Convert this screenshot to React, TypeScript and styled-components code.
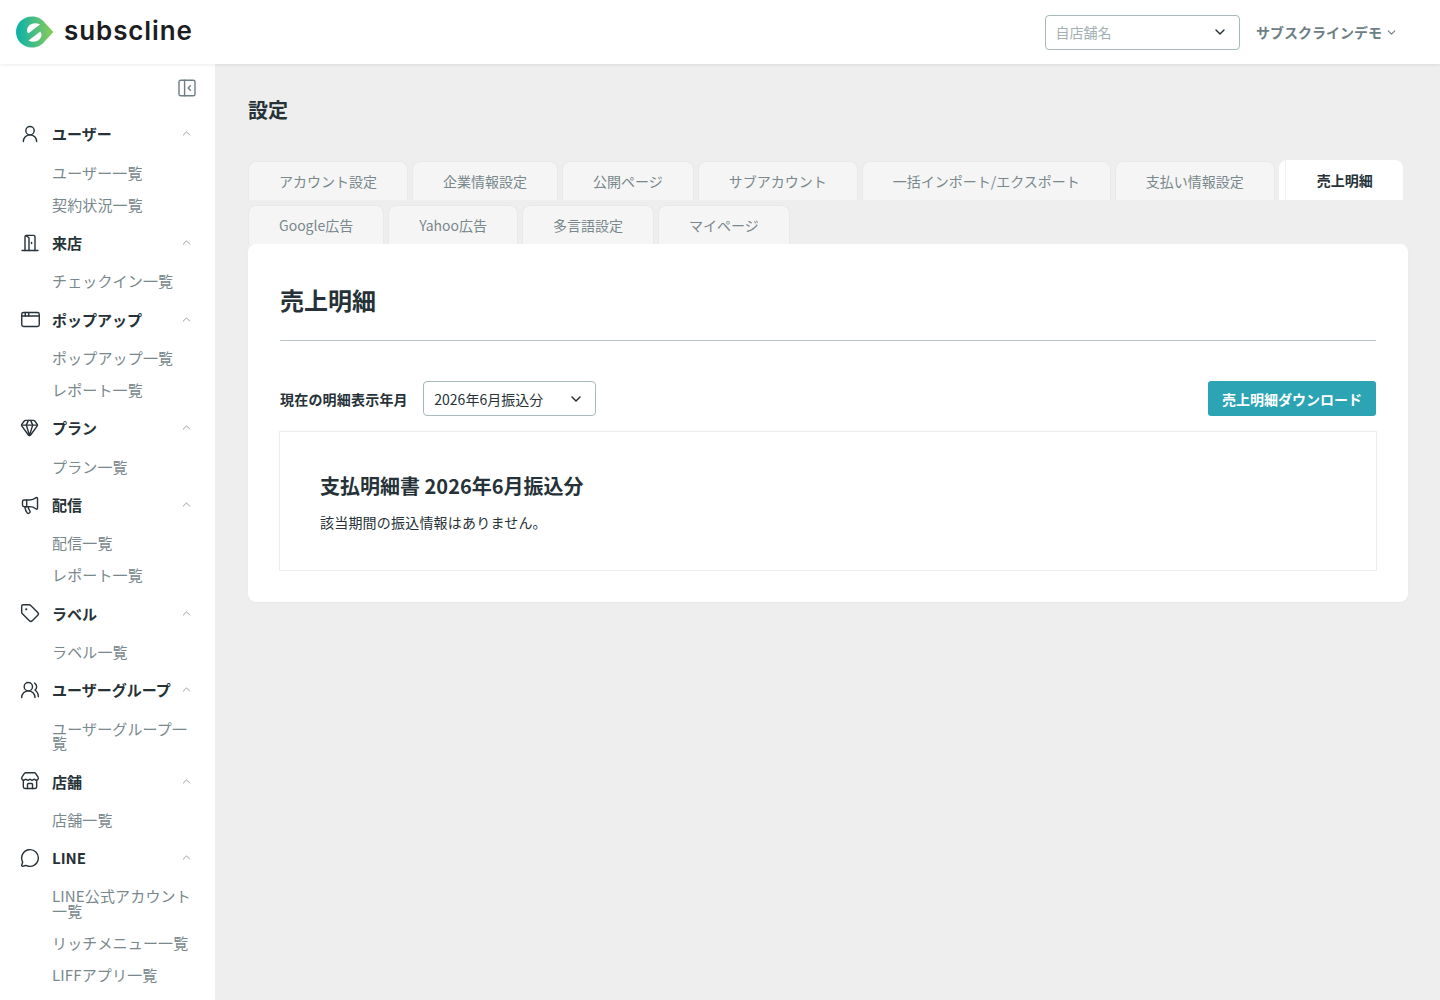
import React from "react";
import styled, { createGlobalStyle } from "styled-components";
import {
    UserRound,
    AppWindow,
    Gem,
    Megaphone,
    Tag,
    UsersRound,
    Store,
    MessageCircle,
    ChevronUp,
    ChevronDown,
} from "lucide-react";

const DoorIcon = () => (
    <svg width="20" height="20" viewBox="0 0 20 20" fill="none" stroke="#263238" strokeWidth="1.4" strokeLinecap="round" strokeLinejoin="round">
        <path d="M2 17.5h16" />
        <path d="M5 17.5V3.8C5 3 5.6 2.4 6.4 2.4h7.2c.8 0 1.4.6 1.4 1.4v13.7" />
        <path d="M6 2.6l3 2.2v12.7" />
        <path d="M11.6 9.5v1" />
    </svg>
);

const Logo = () => (
    <svg width="38" height="32" viewBox="0 0 38 32">
        <defs>
            <linearGradient id="logoGrad" x1="0" y1="0" x2="1" y2="0">
                <stop offset="0" stopColor="#09b1ab" />
                <stop offset="1" stopColor="#8ccb57" />
            </linearGradient>
        </defs>
        <path d="M16 0.5C22 0.5 26 3 29 7L37.5 16 29 25C26 29 22 31.5 16 31.5 7 31.5 0 24.5 0 16S7 .5 16 .5Z" fill="url(#logoGrad)" />
        <path d="M24 8.5C20 6.5 15.5 7 12.7 10 10.5 12.4 10.5 15.5 12.2 17.5Z" fill="#fff" />
        <path d="M12.5 24.5C16.5 26.5 21 26 23.8 23 26 20.6 26 17.5 24.3 15.5Z" fill="#fff" />
    </svg>
);

const CollapseIcon = () => (
    <svg width="18" height="18" viewBox="0 0 18 18" fill="none" stroke="#6c7f84" strokeWidth="1.4" strokeLinecap="round" strokeLinejoin="round">
        <rect x="1" y="1.2" width="16" height="15.6" rx="1.6" />
        <path d="M6.6 1.2v15.6" />
        <path d="M12.4 6.8 10.2 9l2.2 2.2" />
    </svg>
);

const menu = [
    { icon: <UserRound size={20} strokeWidth={1.7} />, label: "ユーザー", items: ["ユーザー一覧", "契約状況一覧"] },
    { icon: <DoorIcon />, label: "来店", items: ["チェックイン一覧"] },
    { icon: <AppWindow size={21} strokeWidth={1.6} />, label: "ポップアップ", items: ["ポップアップ一覧", "レポート一覧"] },
    { icon: <Gem size={19} strokeWidth={1.8} />, label: "プラン", items: ["プラン一覧"] },
    { icon: <Megaphone size={20} strokeWidth={1.7} />, label: "配信", items: ["配信一覧", "レポート一覧"] },
    { icon: <Tag size={20} strokeWidth={1.7} />, label: "ラベル", items: ["ラベル一覧"] },
    { icon: <UsersRound size={20} strokeWidth={1.7} />, label: "ユーザーグループ", items: ["ユーザーグループ一覧"] },
    { icon: <Store size={20} strokeWidth={1.7} />, label: "店舗", items: ["店舗一覧"] },
    { icon: <MessageCircle size={20} strokeWidth={1.7} />, label: "LINE", items: ["LINE公式アカウント一覧", "リッチメニュー一覧", "LIFFアプリ一覧"] },
];

const tabs = [
    "アカウント設定",
    "企業情報設定",
    "公開ページ",
    "サブアカウント",
    "一括インポート/エクスポート",
    "支払い情報設定",
    "売上明細",
    "Google広告",
    "Yahoo広告",
    "多言語設定",
    "マイページ",
];

const App = () => {
    return (
        <>
            <GlobalStyle />
            <Page>
                <Header>
                    <Brand>
                        <Logo />
                        <BrandName>subscline</BrandName>
                    </Brand>
                    <HeaderRight>
                        <StoreSelect>
                            <span>自店舗名</span>
                            <ChevronDown size={16} strokeWidth={2.2} color="#263238" />
                        </StoreSelect>
                        <Account>
                            サブスクラインデモ
                            <ChevronDown size={13} strokeWidth={2} color="#6c7f84" />
                        </Account>
                    </HeaderRight>
                </Header>
                <Body>
                    <Sidebar>
                        <CollapseRow>
                            <CollapseIcon />
                        </CollapseRow>
                        {menu.map((group) => (
                            <div key={group.label}>
                                <GroupHead>
                                    <GroupIcon>{group.icon}</GroupIcon>
                                    <GroupLabel>{group.label}</GroupLabel>
                                    <ChevronUp size={13} strokeWidth={1.6} color="#7f9094" />
                                </GroupHead>
                                {group.items.map((item) => (
                                    <SubItem key={item}>{item}</SubItem>
                                ))}
                            </div>
                        ))}
                    </Sidebar>
                    <Main>
                        <PageTitle>設定</PageTitle>
                        <TabList>
                            {tabs.map((tab) => (
                                <Tab key={tab} $active={tab === "売上明細"}>
                                    {tab}
                                </Tab>
                            ))}
                        </TabList>
                        <Panel>
                            <PanelTitle>売上明細</PanelTitle>
                            <Toolbar>
                                <MonthLabel>現在の明細表示年月</MonthLabel>
                                <MonthSelect>
                                    <span>2026年6月振込分</span>
                                    <ChevronDown size={16} strokeWidth={2.2} color="#263238" />
                                </MonthSelect>
                                <DownloadButton>売上明細ダウンロード</DownloadButton>
                            </Toolbar>
                            <Statement>
                                <StatementTitle>支払明細書 2026年6月振込分</StatementTitle>
                                <StatementText>該当期間の振込情報はありません。</StatementText>
                            </Statement>
                        </Panel>
                    </Main>
                </Body>
            </Page>
        </>
    );
};

export default App;

const GlobalStyle = createGlobalStyle`
    html, body {
        margin: 0;
        padding: 0;
        background: #eeeeee;
    }
    * {
        box-sizing: border-box;
    }
    body {
        font-family: "Noto Sans CJK JP", "Noto Sans", sans-serif;
        color: #263238;
    }
`;

const Page = styled.div`
    height: 1000px;
    overflow: hidden;
    display: flex;
    flex-direction: column;
`;
const Header = styled.header`
    height: 64px;
    flex: none;
    background: #ffffff;
    display: flex;
    align-items: center;
    justify-content: space-between;
    padding: 0 42px 0 16px;
    box-shadow: 0 1px 3px rgba(0, 0, 0, 0.08);
    position: relative;
    z-index: 2;
`;
const Brand = styled.div`
    display: flex;
    align-items: center;
    gap: 10px;
`;
const BrandName = styled.div`
    font-family: Inter, "Noto Sans", sans-serif;
    font-size: 26px;
    font-weight: 600;
    letter-spacing: 0.9px;
    color: #1d1d1f;
    line-height: 28px;
    padding-bottom: 2px;
`;
const HeaderRight = styled.div`
    display: flex;
    align-items: center;
    gap: 16px;
`;
const StoreSelect = styled.div`
    width: 195px;
    height: 35px;
    border: 1px solid #a9b8bb;
    border-radius: 4px;
    display: flex;
    align-items: center;
    justify-content: space-between;
    padding: 0 11px 0 9.5px;
    font-size: 14px;
    color: #a3b1b4;
`;
const Account = styled.div`
    display: flex;
    align-items: center;
    gap: 3px;
    font-size: 14px;
    font-weight: 700;
    color: #6c7f84;
`;
const Body = styled.div`
    flex: 1;
    display: flex;
    min-height: 0;
`;
const Sidebar = styled.nav`
    width: 215px;
    flex: none;
    background: #ffffff;
    padding: 0 22px 0 20px;
    overflow: hidden;
`;
const CollapseRow = styled.div`
    height: 47.6px;
    display: flex;
    justify-content: flex-end;
    align-items: flex-start;
    padding-top: 15px;
    margin-right: -3px;
`;
const GroupHead = styled.div`
    height: 44.7px;
    display: flex;
    align-items: center;
`;
const GroupIcon = styled.div`
    width: 32px;
    flex: none;
    display: flex;
    align-items: center;
    color: #263238;
`;
const GroupLabel = styled.div`
    flex: 1;
    font-size: 15px;
    font-weight: 700;
    color: #263238;
    white-space: nowrap;
`;
const SubItem = styled.div`
    padding: 9.3px 0 8.2px 32px;
    font-size: 15px;
    line-height: 14.5px;
    letter-spacing: 0.15px;
    color: #78888c;
`;
const Main = styled.main`
    flex: 1;
    min-width: 0;
    padding: 31px 32px 0 33px;
`;
const PageTitle = styled.h1`
    margin: 0 0 36px;
    font-size: 20px;
    font-weight: 700;
    line-height: 29px;
    color: #263238;
`;
const TabList = styled.div`
    display: flex;
    flex-wrap: wrap;
    column-gap: 4px;
    row-gap: 4px;
    padding-right: 4px;
`;
const Tab = styled.div<{ $active?: boolean }>`
    position: relative;
    height: ${(p) => (p.$active ? "40px" : "39px")};
    margin-top: ${(p) => (p.$active ? "0" : "1px")};
    padding: ${(p) => (p.$active ? "0 30px 0 38px" : "0 30px")};
    display: flex;
    align-items: center;
    font-size: 14px;
    font-weight: ${(p) => (p.$active ? 700 : 400)};
    color: ${(p) => (p.$active ? "#263238" : "#78888c")};
    background: ${(p) => (p.$active ? "#ffffff" : "#f5f5f5")};
    border: ${(p) => (p.$active ? "none" : "1px solid #e9e9e9")};
    border-bottom: none;
    border-radius: 8px 8px 0 0;
    &::before {
        content: "";
        display: ${(p) => (p.$active ? "block" : "none")};
        position: absolute;
        left: 6px;
        top: 0;
        bottom: 0;
        width: 1px;
        background: #f1f1f1;
    }
`;
const Panel = styled.section`
    background: #ffffff;
    border-radius: 8px;
    height: 358px;
    padding: 32px 32px 0;
    position: relative;
    box-shadow: 0 1px 2px rgba(0, 0, 0, 0.04);
`;
const PanelTitle = styled.h2`
    margin: 0;
    height: 65px;
    font-size: 24px;
    font-weight: 700;
    line-height: 48px;
    color: #263238;
    border-bottom: 1px solid #b8c6c8;
`;
const Toolbar = styled.div`
    display: flex;
    align-items: center;
    margin-top: 40px;
`;
const MonthLabel = styled.div`
    font-size: 14px;
    font-weight: 700;
    letter-spacing: 0.2px;
    margin-right: 15px;
`;
const MonthSelect = styled.div`
    width: 173px;
    height: 35px;
    border: 1px solid #a9b8bb;
    border-radius: 4px;
    display: flex;
    align-items: center;
    justify-content: space-between;
    padding: 0 11px 0 10.5px;
    font-size: 14px;
    color: #263238;
`;
const DownloadButton = styled.button`
    margin-left: auto;
    width: 168px;
    height: 35px;
    border: none;
    border-radius: 3px;
    background: #2ca4b4;
    color: #ffffff;
    font-family: inherit;
    font-size: 14px;
    font-weight: 700;
    padding: 0;
`;
const Statement = styled.div`
    margin: 15px -1px 0;
    height: 140px;
    border: 1px solid #ededed;
    padding: 38px 40px 0;
`;
const StatementTitle = styled.h3`
    margin: 0;
    font-size: 20px;
    font-weight: 700;
    line-height: 32px;
    color: #263238;
`;
const StatementText = styled.p`
    margin: 9px 0 0;
    font-size: 14px;
    line-height: 22px;
    letter-spacing: 0.2px;
    color: #263238;
`;
